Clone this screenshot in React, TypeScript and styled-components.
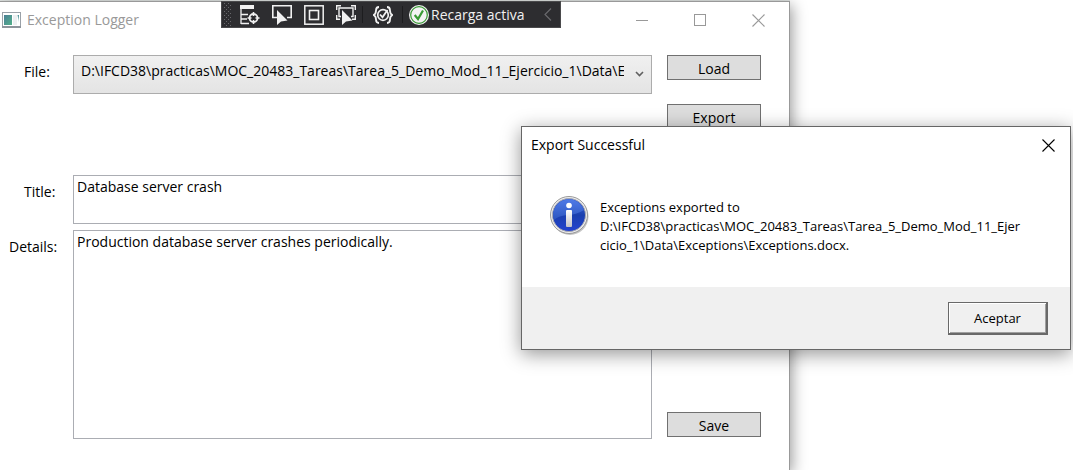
import React from "react";
import styled, { createGlobalStyle } from "styled-components";

const GlobalStyle = createGlobalStyle`
  * { box-sizing: border-box; }
  body { margin: 0; background: #fff; color: #000; overflow: hidden; }
  body, button, input, select, textarea {
    font-family: "Open Sans", "Noto Sans", sans-serif;
    font-size: 14px;
    line-height: 20px;
  }
`;

const Desktop = styled.div`
  position: relative;
  min-height: 100vh;
  display: flex;
  flex-direction: column;
  overflow: hidden;
`;

const EditorStrip = styled.div`
  height: 1px;
  margin-right: 283px;
  background: #dfe3e1;
`;

const AppWindow = styled.main`
  flex: 1;
  display: flex;
  flex-direction: column;
  margin-right: 283px;
  background: #fff;
  border: solid #999;
  border-width: 1px 1px 0 0;
  box-shadow: 2px 4px 14px rgba(0, 0, 0, 0.4);
`;

const TitleBar = styled.header`
  display: flex;
  align-items: center;
  height: 36px;
  padding-left: 2px;
  gap: 6px;
  color: #999;
`;

const AppTitle = styled.h1`
  flex: 1;
  margin: 0;
  font-size: 14px;
  font-weight: 400;
`;

const WindowControls = styled.div`
  display: flex;
  padding-right: 2px;
`;

const ControlButton = styled.button<{ $color: string; $width: number }>`
  display: grid;
  place-items: center;
  width: ${(p) => p.$width}px;
  height: 36px;
  padding: 0;
  border: 0;
  background: none;
  color: ${(p) => p.$color};
`;

const Content = styled.div`
  display: flex;
  gap: 15px;
  padding: 17px 28px 31px 0;
`;

const Form = styled.form`
  flex: 1;
  min-width: 0;
  display: flex;
  flex-direction: column;
`;

const Row = styled.div<{ $space: number }>`
  display: flex;
  margin-bottom: ${(p) => p.$space}px;
`;

const Label = styled.label<{ $indent: number }>`
  flex: none;
  width: 73px;
  padding: 7px 0 0 ${(p) => p.$indent}px;
`;

const ComboWrap = styled.div`
  position: relative;
  flex: 1;
  min-width: 0;
  display: flex;
`;

const Combo = styled.select`
  appearance: none;
  width: 100%;
  height: 39px;
  padding: 0 27px 8px 7px;
  border: 1px solid #acacac;
  border-radius: 0;
  background: linear-gradient(#f0f0f0, #e4e4e4);
  color: #000;
  overflow: hidden;
`;

const ComboArrow = styled.svg`
  position: absolute;
  right: 8px;
  top: 15px;
  pointer-events: none;
`;

const TextArea = styled.textarea<{ $height: number }>`
  flex: 1;
  min-width: 0;
  height: ${(p) => p.$height}px;
  padding: 1px 3px;
  border: 1px solid #abadb3;
  border-radius: 0;
  background: #fff;
  color: #000;
  resize: none;
  outline: none;
`;

const Actions = styled.div`
  display: flex;
  flex-direction: column;
  width: 94px;
  gap: 24px;
  padding-bottom: 2px;
`;

const ActionButton = styled.button<{ $last?: boolean }>`
  height: 25px;
  padding: 3px 0 0;
  margin-top: ${(p) => (p.$last ? "auto" : "0")};
  border: 1px solid #707070;
  border-radius: 0;
  background: #ddd;
  color: #000;
`;

const DebugBar = styled.div`
  position: absolute;
  top: 1px;
  left: 221px;
  display: flex;
  align-items: center;
  width: 340px;
  height: 27px;
  border: 1px solid #4a4a4c;
  background: #2d2d30;
  color: #f1f1f1;
`;

const DebugTool = styled.button<{ $width: number }>`
  display: grid;
  place-items: center;
  width: ${(p) => p.$width}px;
  height: 25px;
  padding: 0;
  border: 0;
  background: none;
  color: inherit;
`;

const Divider = styled.span`
  width: 1px;
  height: 17px;
  background: #1d1d1f;
`;

const ReloadButton = styled.button`
  flex: 1;
  display: flex;
  align-items: center;
  gap: 2px;
  padding: 0 0 0 6px;
  border: 0;
  background: none;
  color: inherit;
  white-space: nowrap;
`;

const Dialog = styled.section`
  position: absolute;
  top: 126px;
  right: 2px;
  width: 550px;
  border: 1px solid #666;
  background: #fff;
  box-shadow: 0 4px 18px rgba(0, 0, 0, 0.42);
`;

const DialogHeader = styled.header`
  display: flex;
  align-items: center;
  height: 36px;
  padding-left: 9px;
`;

const DialogTitle = styled.h2`
  flex: 1;
  margin: 0;
  font-size: 14px;
  font-weight: 400;
`;

const DialogBody = styled.div`
  display: flex;
  gap: 10px;
  height: 124px;
  padding: 33px 28px 0;
`;

const InfoBadge = styled.svg`
  flex: none;
`;

const Message = styled.p`
  margin: 2px 0 0;
  font-size: 13px;
  line-height: 19px;
`;

const DialogFooter = styled.footer`
  display: flex;
  justify-content: flex-end;
  padding: 15px 22px 14px;
  background: #f0f0f0;
`;

const AcceptButton = styled.button`
  width: 100px;
  height: 33px;
  padding: 0;
  border: solid #696969;
  border-width: 1px 2px 2px 1px;
  border-radius: 0;
  background: #f0f0f0;
  box-shadow: inset 1px 1px #fff, inset -1px -1px #a0a0a0;
  color: #000;
  font-size: 13px;
`;

const AppIcon = () => (
  <svg width="19" height="16" viewBox="0 0 19 16" aria-hidden="true">
    <defs>
      <linearGradient id="pane" x1="0" y1="0" x2="1" y2="1">
        <stop offset="0" stopColor="#4b7f96" />
        <stop offset="1" stopColor="#52b08a" />
      </linearGradient>
      <linearGradient id="sidePane" x1="0" y1="0" x2="0" y2="1">
        <stop offset="0" stopColor="#4b8f96" />
        <stop offset="1" stopColor="#dff0ea" />
      </linearGradient>
    </defs>
    <rect x="0.5" y="0.5" width="18" height="14" fill="#fff" stroke="#9aa1a8" />
    <rect x="0" y="14" width="19" height="2" fill="#8d949b" />
    <rect x="2" y="3" width="8" height="10" fill="url(#pane)" />
    <rect x="11" y="3" width="4" height="10" fill="#eceff1" />
    <path d="M15.500 3H17v8z" fill="url(#sidePane)" />
  </svg>
);

const CloseIcon = () => (
  <svg width="13" height="13" viewBox="0 0 13 13" aria-hidden="true">
    <path d="M.5 .5l12 12M12.5 .5l-12 12" stroke="currentColor" strokeWidth="1.1" fill="none" />
  </svg>
);

const pointer = "M0 0V15L4 11.500L10.500 10.500Z";

const TreeIcon = () => (
  <svg width="20" height="20" viewBox="0 0 20 20" fill="none" stroke="#f1f1f1" aria-hidden="true">
    <path d="M0 0h14v4H0z" fill="#f1f1f1" stroke="none" />
    <path d="M1 4v15M1 9.500h7M1 14h6M1 18.500h8" strokeWidth="1.3" />
    <circle cx="13.500" cy="13" r="4" strokeWidth="1.800" />
    <path d="M13.500 7v4M13.500 15v4M7.500 13h4M15.500 13h4" strokeWidth="1.600" />
  </svg>
);

const SelectIcon = () => (
  <svg width="20" height="20" viewBox="0 0 20 20" fill="none" aria-hidden="true">
    <path d="M5 12.500H.8V.8h18.400v11.700H15" stroke="#f1f1f1" strokeWidth="1.600" />
    <path d={pointer} transform="translate(5 5)" fill="#f1f1f1" />
  </svg>
);

const AdornerIcon = () => (
  <svg width="20" height="20" viewBox="0 0 20 20" fill="none" stroke="#f1f1f1" aria-hidden="true">
    <rect x="0.800" y="0.800" width="18.400" height="18.400" strokeWidth="1.500" />
    <rect x="5.500" y="5.500" width="9" height="9" strokeWidth="1.600" />
  </svg>
);

const FocusIcon = () => (
  <svg width="20" height="20" viewBox="0 0 20 20" fill="none" aria-hidden="true">
    <path d="M.7 5V.7H5M15 .7h4.300V5M.7 10v4.300H4M19.300 10v4.300H16" stroke="#f1f1f1" strokeWidth="1.400" />
    <path d="M5 11.500H3V3h14v8.500H15" stroke="#f1f1f1" strokeWidth="1.400" />
    <path d={pointer} transform="translate(6 5)" fill="#f1f1f1" />
  </svg>
);

const BindingIcon = () => (
  <svg width="20" height="18" viewBox="0 0 20 18" fill="none" stroke="#f1f1f1" aria-hidden="true">
    <path d="M6 1C3.500 1 3 2 3 4.500S2.500 8 .7 9C2.500 10 3 11 3 13.500S3.500 17 6 17M14 1C16.500 1 17 2 17 4.500S17.500 8 19.300 9C17.500 10 17 11 17 13.500S16.500 17 14 17" strokeWidth="1.800" />
    <circle cx="10" cy="9" r="5.300" strokeWidth="1.700" />
    <path d="M7 8.500l2.500 2.800L14.500 4" strokeWidth="1.800" />
  </svg>
);

const CheckIcon = () => (
  <svg width="20" height="20" viewBox="0 0 20 20" fill="none" aria-hidden="true">
    <circle cx="10" cy="10" r="10" fill="#f3f3f3" />
    <circle cx="10" cy="10" r="8.300" stroke="#389a34" strokeWidth="1.200" />
    <path d="M5.700 10l3.300 4L14 5.500" stroke="#389a34" strokeWidth="2.200" />
  </svg>
);

const GripIcon = () => (
  <svg width="8" height="23" viewBox="0 0 8 23" aria-hidden="true">
    <defs>
      <pattern id="dots" width="4" height="4" patternUnits="userSpaceOnUse">
        <path d="M0 0h1v1H0zM2 2h1v1H2z" fill="#68686c" />
      </pattern>
    </defs>
    <rect width="7" height="23" fill="url(#dots)" />
  </svg>
);

const InfoIcon = () => (
  <InfoBadge width="40" height="40" viewBox="0 0 40 40" aria-hidden="true">
    <defs>
      <linearGradient id="ball" x1="0" y1="0" x2="0" y2="1">
        <stop offset="0" stopColor="#3f6bdc" />
        <stop offset="0.5" stopColor="#1a3fae" />
        <stop offset="1" stopColor="#2444d0" />
      </linearGradient>
      <linearGradient id="shine" x1="0" y1="0" x2="0" y2="1">
        <stop offset="0" stopColor="#4f7ae6" />
        <stop offset="1" stopColor="#2c55c0" />
      </linearGradient>
      <linearGradient id="stem" x1="0" y1="0" x2="0" y2="1">
        <stop offset="0" stopColor="#fff" />
        <stop offset="1" stopColor="#c4c4c8" />
      </linearGradient>
    </defs>
    <circle cx="20" cy="20.500" r="18.500" fill="#c4c4c4" />
    <circle cx="19" cy="19" r="18.500" fill="#eee" stroke="#999" />
    <circle cx="19" cy="19" r="16.500" fill="url(#ball)" stroke="#a8a8b0" />
    <path d="M3 19A16 16 0 0 1 34 14Q26 19 17 19Q8 20 4 24Q3 21 3 19Z" fill="url(#shine)" />
    <circle cx="19" cy="9.500" r="2.800" fill="#fff" />
    <rect x="16" y="14" width="6" height="17" rx="1" fill="url(#stem)" />
  </InfoBadge>
);

const filePath =
  "D:\\IFCD38\\practicas\\MOC_20483_Tareas\\Tarea_5_Demo_Mod_11_Ejercicio_1\\Data\\Exceptions";

export default function App() {
  return (
    <>
      <GlobalStyle />
      <Desktop>
        <EditorStrip />
        <AppWindow>
          <TitleBar>
            <AppIcon />
            <AppTitle>Exception Logger</AppTitle>
            <WindowControls>
              <ControlButton $color="#999" $width={58} aria-label="Minimize">
                <svg width="12" height="1" aria-hidden="true">
                  <rect width="12" height="1" fill="currentColor" />
                </svg>
              </ControlButton>
              <ControlButton $color="#999" $width={58} aria-label="Maximize">
                <svg width="12" height="12" fill="none" aria-hidden="true">
                  <rect x="0.5" y="0.5" width="11" height="11" stroke="currentColor" />
                </svg>
              </ControlButton>
              <ControlButton $color="#999" $width={58} aria-label="Close">
                <CloseIcon />
              </ControlButton>
            </WindowControls>
          </TitleBar>
          <Content>
            <Form onSubmit={(e) => e.preventDefault()}>
              <Row $space={81}>
                <Label htmlFor="file" $indent={24}>File:</Label>
                <ComboWrap>
                  <Combo id="file">
                    <option>{filePath}</option>
                  </Combo>
                  <ComboArrow width="9" height="8" viewBox="0 0 9 8" fill="none" aria-hidden="true">
                    <path d="M1 2l3.500 3.500L8 2" stroke="#606060" strokeWidth="1.600" />
                  </ComboArrow>
                </ComboWrap>
              </Row>
              <Row $space={6}>
                <Label htmlFor="title" $indent={24}>Title:</Label>
                <TextArea id="title" $height={49} defaultValue="Database server crash" spellCheck={false} />
              </Row>
              <Row $space={0}>
                <Label htmlFor="details" $indent={9}>Details:</Label>
                <TextArea
                  id="details"
                  $height={209}
                  defaultValue="Production database server crashes periodically."
                  spellCheck={false}
                />
              </Row>
            </Form>
            <Actions>
              <ActionButton>Load</ActionButton>
              <ActionButton>Export</ActionButton>
              <ActionButton $last>Save</ActionButton>
            </Actions>
          </Content>
        </AppWindow>

        <DebugBar role="toolbar">
          <DebugTool $width={11} aria-label="Move toolbar"><GripIcon /></DebugTool>
          <DebugTool $width={33} aria-label="Live Visual Tree"><TreeIcon /></DebugTool>
          <DebugTool $width={32} aria-label="Select element"><SelectIcon /></DebugTool>
          <DebugTool $width={32} aria-label="Layout adorners"><AdornerIcon /></DebugTool>
          <DebugTool $width={32} aria-label="Track focused element"><FocusIcon /></DebugTool>
          <Divider />
          <DebugTool $width={39} aria-label="Binding failures"><BindingIcon /></DebugTool>
          <Divider />
          <ReloadButton><CheckIcon />Recarga activa</ReloadButton>
          <DebugTool $width={24} aria-label="Collapse">
            <svg width="8" height="13" viewBox="0 0 8 13" fill="none" aria-hidden="true">
              <path d="M7 .5l-6 6 6 6" stroke="#68686c" strokeWidth="1.200" />
            </svg>
          </DebugTool>
        </DebugBar>

        <Dialog role="dialog" aria-labelledby="dialog-title">
          <DialogHeader>
            <DialogTitle id="dialog-title">Export Successful</DialogTitle>
            <ControlButton $color="#000" $width={43} aria-label="Close">
              <CloseIcon />
            </ControlButton>
          </DialogHeader>
          <DialogBody>
            <InfoIcon />
            <Message>
              Exceptions exported to
              <br />
              D:\IFCD38\practicas\MOC_20483_Tareas\Tarea_5_Demo_Mod_11_Ejer
              <br />
              cicio_1\Data\Exceptions\Exceptions.docx.
            </Message>
          </DialogBody>
          <DialogFooter>
            <AcceptButton>Aceptar</AcceptButton>
          </DialogFooter>
        </Dialog>
      </Desktop>
    </>
  );
}
